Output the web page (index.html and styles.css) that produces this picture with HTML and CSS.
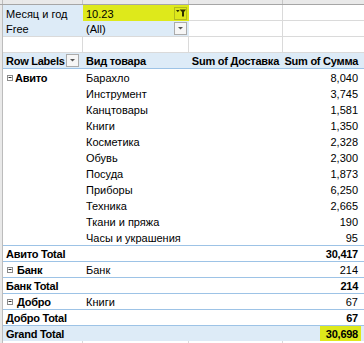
FILE: index.html
```html
<!DOCTYPE html>
<html lang="ru">
<head>
<meta charset="utf-8">
<title>Pivot</title>
<link rel="stylesheet" href="styles.css">
</head>
<body>
<div class="sheet">
  <div class="row colhdr">
    <div class="rh"></div>
    <div class="ch"></div>
    <div class="ch"></div>
    <div class="ch"></div>
    <div class="ch last"></div>
  </div>

  <div class="row">
    <div class="rh"></div>
    <div class="c filt">Месяц и год</div>
    <div class="c filt hl btncell">10.23<span class="btn btn-hl"><svg width="10" height="8" viewBox="0 0 10 8"><path d="M0 1H3.6L1.8 3.2Z" fill="#2e3000"/><path d="M3.6 0.5H10L8 3V7.5H6V3Z" fill="#2e3000"/></svg></span></div>
    <div class="c g"></div>
    <div class="c g last"></div>
  </div>

  <div class="row">
    <div class="rh"></div>
    <div class="c filt gb">Free</div>
    <div class="c filt gb btncell">(All)<span class="btn"><svg width="5" height="3" viewBox="0 0 5 3"><path d="M0 0H5L2.5 2.6Z" fill="#555"/></svg></span></div>
    <div class="c g"></div>
    <div class="c g last"></div>
  </div>

  <div class="row">
    <div class="rh"></div>
    <div class="c g"></div>
    <div class="c g"></div>
    <div class="c g"></div>
    <div class="c g last"></div>
  </div>

  <div class="row hdr">
    <div class="rh"></div>
    <div class="c b btncell">Row Labels<span class="btn"><svg width="5" height="3" viewBox="0 0 5 3"><path d="M0 0H5L2.5 2.6Z" fill="#555"/></svg></span></div>
    <div class="c b">Вид товара</div>
    <div class="c b r">Sum of Доставка</div>
    <div class="c b r rr">Sum of Сумма</div>
  </div>

  <div class="row">
    <div class="rh"></div>
    <div class="c b"><svg class="tog" width="6" height="6" viewBox="0 0 6 6"><rect x="0.5" y="0.5" width="5" height="5" fill="#fff" stroke="#8c8c8c"/><path d="M1.5 2.5H4.5" stroke="#333"/></svg>Авито</div>
    <div class="c">Барахло</div>
    <div class="c"></div>
    <div class="c r rr">8,040</div>
  </div>
  <div class="row"><div class="rh"></div><div class="c"></div><div class="c">Инструмент</div><div class="c"></div><div class="c r rr">3,745</div></div>
  <div class="row"><div class="rh"></div><div class="c"></div><div class="c">Канцтовары</div><div class="c"></div><div class="c r rr">1,581</div></div>
  <div class="row"><div class="rh"></div><div class="c"></div><div class="c">Книги</div><div class="c"></div><div class="c r rr">1,350</div></div>
  <div class="row"><div class="rh"></div><div class="c"></div><div class="c">Косметика</div><div class="c"></div><div class="c r rr">2,328</div></div>
  <div class="row"><div class="rh"></div><div class="c"></div><div class="c">Обувь</div><div class="c"></div><div class="c r rr">2,300</div></div>
  <div class="row"><div class="rh"></div><div class="c"></div><div class="c">Посуда</div><div class="c"></div><div class="c r rr">1,873</div></div>
  <div class="row"><div class="rh"></div><div class="c"></div><div class="c">Приборы</div><div class="c"></div><div class="c r rr">6,250</div></div>
  <div class="row"><div class="rh"></div><div class="c"></div><div class="c">Техника</div><div class="c"></div><div class="c r rr">2,665</div></div>
  <div class="row"><div class="rh"></div><div class="c"></div><div class="c">Ткани и пряжа</div><div class="c"></div><div class="c r rr">190</div></div>
  <div class="row"><div class="rh"></div><div class="c"></div><div class="c">Часы и украшения</div><div class="c"></div><div class="c r rr">95</div></div>

  <div class="row bt">
    <div class="rh"></div>
    <div class="c b">Авито Total</div>
    <div class="c"></div>
    <div class="c"></div>
    <div class="c b r rr">30,417</div>
  </div>

  <div class="row bt">
    <div class="rh"></div>
    <div class="c b"><svg class="tog wide" width="6" height="6" viewBox="0 0 6 6"><rect x="0.5" y="0.5" width="5" height="5" fill="#fff" stroke="#8c8c8c"/><path d="M1.5 2.5H4.5" stroke="#333"/></svg>Банк</div>
    <div class="c">Банк</div>
    <div class="c"></div>
    <div class="c r rr">214</div>
  </div>

  <div class="row bt">
    <div class="rh"></div>
    <div class="c b">Банк Total</div>
    <div class="c"></div>
    <div class="c"></div>
    <div class="c b r rr">214</div>
  </div>

  <div class="row bt">
    <div class="rh"></div>
    <div class="c b"><svg class="tog wide" width="6" height="6" viewBox="0 0 6 6"><rect x="0.5" y="0.5" width="5" height="5" fill="#fff" stroke="#8c8c8c"/><path d="M1.5 2.5H4.5" stroke="#333"/></svg>Добро</div>
    <div class="c">Книги</div>
    <div class="c"></div>
    <div class="c r rr">67</div>
  </div>

  <div class="row bt">
    <div class="rh"></div>
    <div class="c b">Добро Total</div>
    <div class="c"></div>
    <div class="c"></div>
    <div class="c b r rr">67</div>
  </div>

  <div class="row bt grand">
    <div class="rh"></div>
    <div class="c b">Grand Total</div>
    <div class="c"></div>
    <div class="c"></div>
    <div class="c b r rr"><span class="mark">30,698</span></div>
  </div>

  <div class="row">
    <div class="rh"></div>
    <div class="c g"></div>
    <div class="c g"></div>
    <div class="c g"></div>
    <div class="c g last"></div>
  </div>
</div>
</body>
</html>
```

FILE: styles.css
```css
* {
  box-sizing: border-box;
}

html, body {
  margin: 0;
  padding: 0;
  background: #ffffff;
  overflow: hidden;
}

body {
  font-family: "Liberation Sans", Arial, sans-serif;
  font-size: 11px;
  color: #000000;
}

.sheet {
  display: flex;
  flex-direction: column;
  width: 364px;
  height: 343px;
  overflow: hidden;
}

.row {
  display: grid;
  grid-template-columns: 3px 80px 106px 94px 1fr;
  height: 16px;
  flex: none;
}

.colhdr {
  height: 5px;
  background: #e9e9e9;
  border-bottom: 1px solid #a6a6a6;
}

.ch {
  border-right: 1px solid #c6c6c6;
}

.rh {
  background: #e9e9e9;
  border-right: 1px solid #bcbcbc;
}

.c {
  display: flex;
  align-items: flex-end;
  line-height: 13px;
  padding: 0 3px;
  white-space: nowrap;
  min-width: 0;
}

.g {
  border-right: 1px solid #dadada;
  border-bottom: 1px solid #dadada;
}

.gb {
  border-bottom: 1px solid #dadada;
}

.last {
  border-right: none;
}

.filt {
  background: #ddebf7;
}

.hl {
  background: #dee91b;
}

.r {
  justify-content: flex-end;
  padding-right: 4px;
}

.rr {
  padding-right: 6px;
}

.b {
  font-weight: 700;
  letter-spacing: -0.25px;
}

.hdr .c {
  background: #ddebf7;
  border-bottom: 1px solid #9dc3e6;
}

.bt .c {
  border-top: 1px solid #9dc3e6;
}

.grand .c {
  background: #ddebf7;
}

.btncell {
  padding-right: 2px;
}

.hdr .btncell {
  padding-right: 4px;
}

.btn {
  margin-left: auto;
  align-self: center;
  flex: none;
  width: 13px;
  height: 13px;
  border: 1px solid #ababab;
  background: #f6f6f6;
  display: flex;
  align-items: center;
  justify-content: center;
  letter-spacing: 0;
}

.btn svg {
  display: block;
}

.btn-hl {
  background: transparent;
  border-color: #b3bb1c;
}

.tog {
  flex: none;
  display: block;
  align-self: flex-end;
  margin: 0 2px 4px 1px;
}

.tog.wide {
  margin-right: 4px;
}

.mark {
  background: #dee91b;
  padding: 2px 3px 0 6px;
  margin-right: -3px;
}
```
